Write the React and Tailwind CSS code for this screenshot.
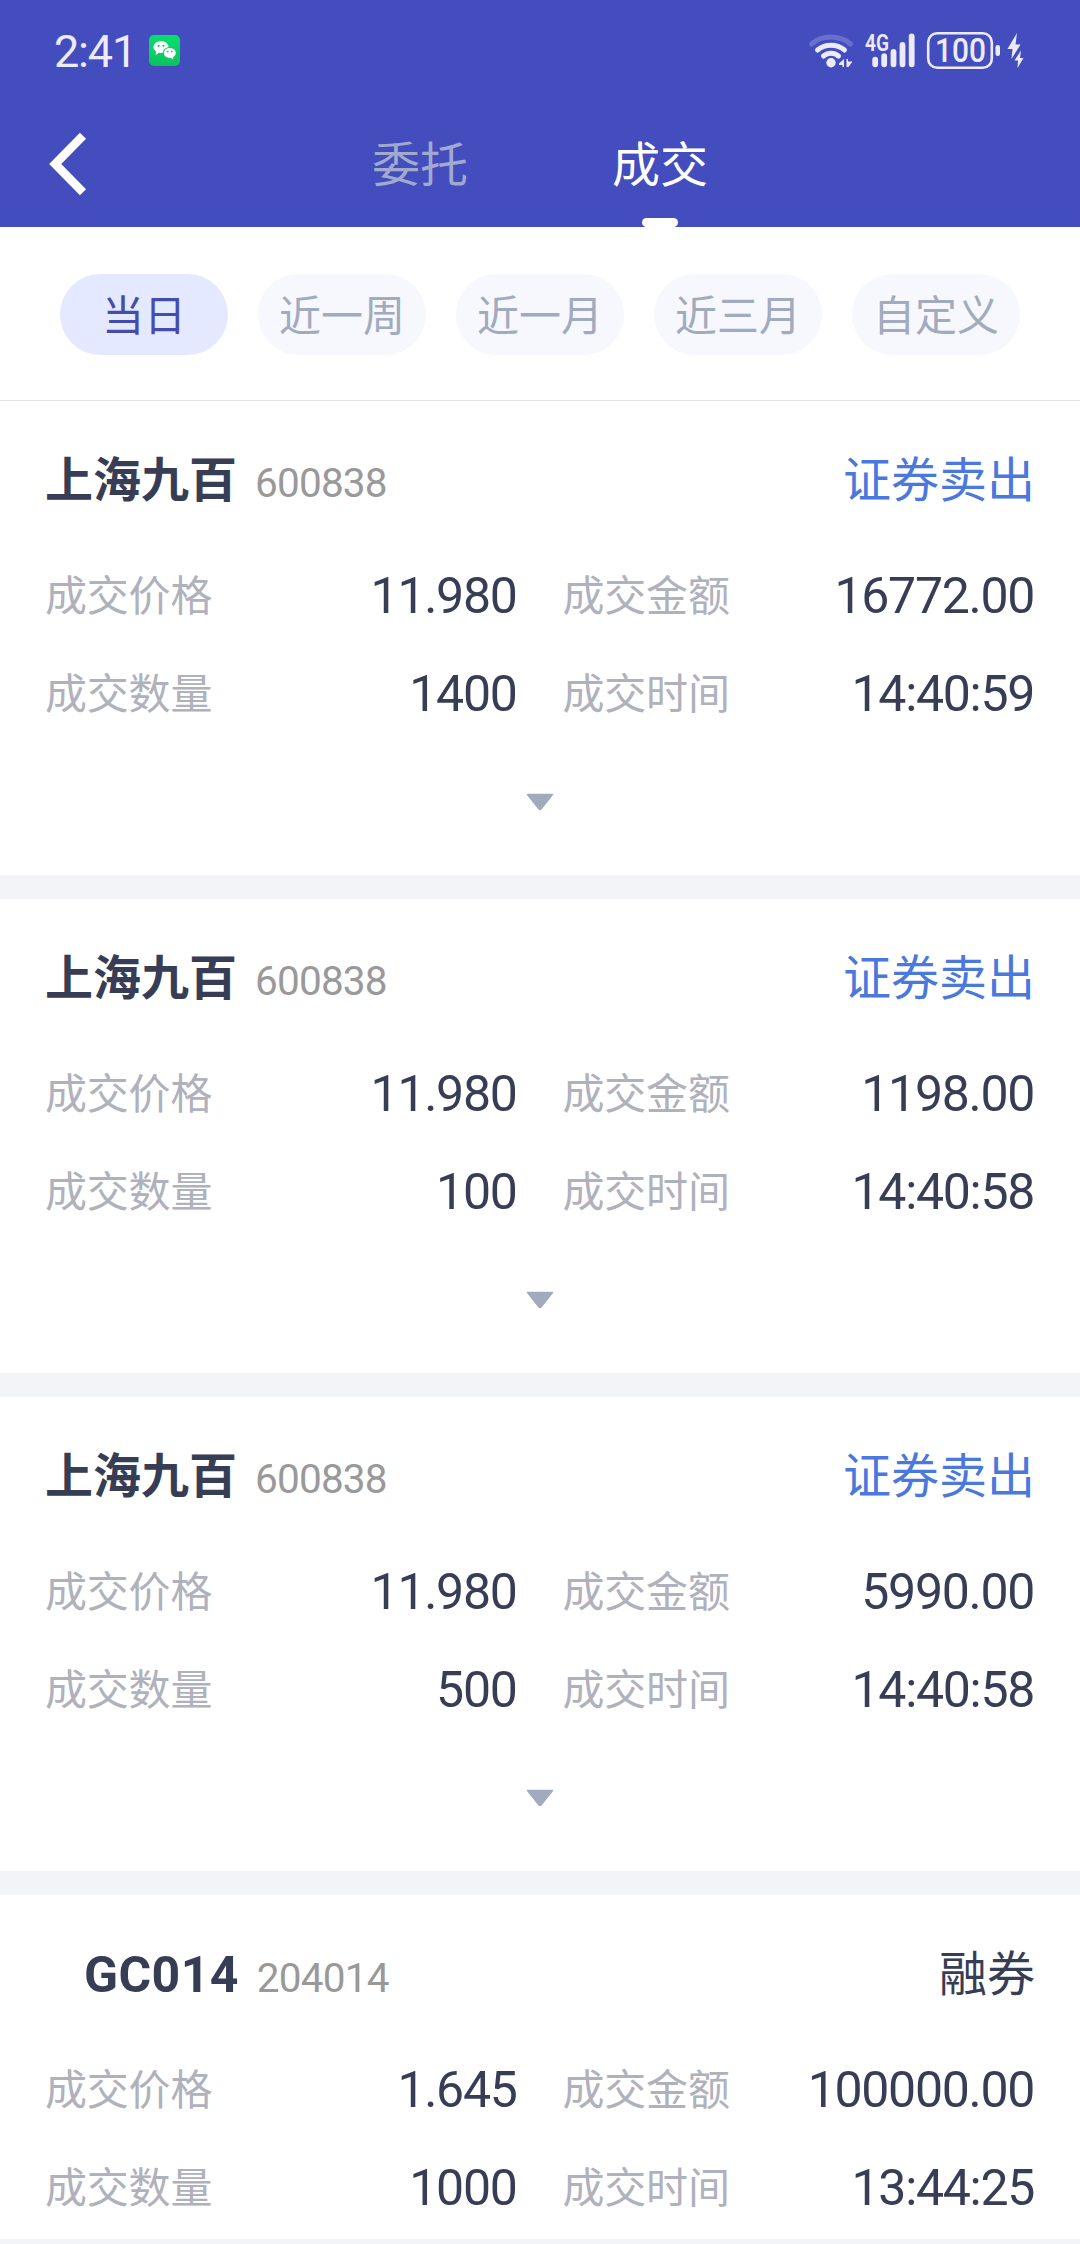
import React, { useState } from 'react';

const tabs = ['委托', '成交'];
const ranges = ['当日', '近一周', '近一月', '近三月', '自定义'];

const deals = [
  { name: '上海九百', code: '600838', side: '证券卖出', sell: true, price: '11.980', amount: '16772.00', qty: '1400', time: '14:40:59' },
  { name: '上海九百', code: '600838', side: '证券卖出', sell: true, price: '11.980', amount: '1198.00', qty: '100', time: '14:40:58' },
  { name: '上海九百', code: '600838', side: '证券卖出', sell: true, price: '11.980', amount: '5990.00', qty: '500', time: '14:40:58' },
  { name: 'GC014', code: '204014', side: '融券', sell: false, price: '1.645', amount: '100000.00', qty: '1000', time: '13:44:25' },
];

const WechatIcon = () => (
  <div className="h-[31px] w-[31px] rounded-[5px] bg-linear-to-b from-[#05df6d] to-[#0cc160]">
    <svg width="31" height="31" viewBox="0 0 31 31" className="block">
      <path d="M7 15.5 L6.8 20 L11 17 Z" fill="#fff" />
      <ellipse cx="12" cy="12" rx="7.6" ry="6.1" fill="#fff" />
      <ellipse cx="20.6" cy="17.8" rx="6.8" ry="5.8" fill="#08d067" />
      <ellipse cx="20.8" cy="18" rx="6" ry="5" fill="#fff" />
      <path d="M20.5 22 L24.2 24.4 L24.2 20.5 Z" fill="#fff" />
      <g fill="#08d067">
        <circle cx="9.6" cy="10.8" r="1.1" />
        <circle cx="14.6" cy="10.8" r="1.1" />
        <circle cx="18.8" cy="16.6" r="0.9" />
        <circle cx="22.8" cy="16.6" r="0.9" />
      </g>
    </svg>
  </div>
);

const StatusIcons = () => (
  <svg width="222" height="42" viewBox="806 30 222 42" fill="none" className="relative top-[1px] block">
    {/* Wifi */}
    <g stroke="#ebebfd" strokeWidth="5" strokeLinecap="round">
      <path d="M811.5 44 A 31 31 0 0 1 850.5 44" opacity="0.22" />
      <path d="M817.5 50 A 22 22 0 0 1 844.5 50" />
      <path d="M823.5 56 A 11.5 11.5 0 0 1 838.5 56" />
    </g>
    <circle cx="831" cy="62.7" r="4.7" fill="#ebebfd" />
    <path d="M839 63.5 L844 59 V67 H842.5 V65 H839 Z M846.5 59 L848 59 V61.5 H852.5 L848.5 67 H846.5 Z" fill="#ebebfd" />
    {/* Signal */}
    <text x="865" y="50.5" fontSize="23" fontWeight="600" textLength="24" lengthAdjust="spacingAndGlyphs" fill="#ebebfd" fontFamily="Roboto, sans-serif">4G</text>
    <g stroke="#ebebfd" strokeWidth="5.8" strokeLinecap="round">
      <path d="M875.2 59.7V64.3M884.2 56.2V64.3M893.5 52V64.3M902.5 45V64.3M911.7 36.5V64.3" />
    </g>
    {/* Battery */}
    <rect x="928.2" y="33.2" width="63.6" height="34.6" rx="9" stroke="#ebebfd" strokeWidth="2.6" />
    <text x="935" y="62" fontSize="33" fontWeight="500" textLength="51" lengthAdjust="spacingAndGlyphs" fill="#ebebfd" fontFamily="Roboto, sans-serif">100</text>
    <rect x="995.5" y="45" width="4.5" height="11" rx="2.2" fill="#ebebfd" />
    <path d="M1017 33 L1007.5 49 H1012.5 L1011.5 59 L1020.5 44.5 H1015.5 Z" fill="#ebebfd" />
    <path d="M1021 50.5 L1014.5 60.5 H1018 L1017.5 68 L1023.5 58 H1020 Z" fill="#ebebfd" />
  </svg>
);

const StatusBar = () => (
  <div className="flex h-[100px] items-center justify-between pl-[54px] pr-[52px]">
    <div className="flex items-center gap-[16px]">
      <span className="w-[79px] pt-[2px] text-[45px] leading-none tracking-[-1.2px] text-[#ebebfd]">2:41</span>
      <WechatIcon />
    </div>
    <StatusIcons />
  </div>
);

const Field = ({ label, value }) => (
  <div className="flex h-[98px] items-center justify-between pt-[3px]">
    <span className="text-[42px] tracking-[-0.2px] text-[#afb1bc]">{label}</span>
    <span className="pr-[1px] pb-[2px] text-[50px] tracking-[-1.3px] text-[#383d56]">{value}</span>
  </div>
);

const DealCard = ({ deal, last }) => (
  <div className="bg-white px-[45px]">
    <div className="flex h-[145px] items-center justify-between pt-[14px]">
      <div className="flex items-baseline">
        <span className={`font-bold text-[#383d56] ${deal.sell ? 'text-[48px]' : 'pl-[39px] text-[50px] tracking-[0.4px]'}`}>{deal.name}</span>
        <span className="ml-[18px] text-[40.5px] tracking-[-0.8px] text-[#999999]">{deal.code}</span>
      </div>
      <span className={`text-[48px] ${deal.sell ? 'text-[#4a78dc]' : 'text-[#383d56]'}`}>{deal.side}</span>
    </div>
    <div className="grid grid-cols-2 gap-x-[45px]">
      <Field label="成交价格" value={deal.price} />
      <Field label="成交金额" value={deal.amount} />
      <Field label="成交数量" value={deal.qty} />
      <Field label="成交时间" value={deal.time} />
    </div>
    {last ? (
      <div className="h-[3px]"></div>
    ) : (
      <div className="flex h-[133px] justify-center pt-[51px]">
        <svg width="28" height="18" viewBox="0 0 28 18">
          <path d="M1.5 1.5 H26.5 L15 16 Q14 17 13 16 Z" fill="#a0abbe" stroke="#a0abbe" strokeWidth="1.5" strokeLinejoin="round" />
        </svg>
      </div>
    )}
  </div>
);

export default function App() {
  const [tab, setTab] = useState('成交');
  const [range, setRange] = useState('当日');

  return (
    <div className="h-[2244px] w-[1080px] overflow-hidden bg-[#f3f4f7] font-['Roboto','Noto_Sans_CJK_SC',sans-serif] leading-none">
      <header className="h-[227px] bg-[#444dbe]">
        <StatusBar />
        <div className="flex h-[127px]">
          <button className="flex w-[300px] pt-[30px] pl-[46px]">
            <svg width="44" height="68" viewBox="0 0 44 68" fill="none" stroke="#fff" strokeWidth="8.6">
              <path d="M37 5.8 L9.2 34 L37 62.2" />
            </svg>
          </button>
          {tabs.map((t) => (
            <button
              key={t}
              onClick={() => setTab(t)}
              className={`flex w-[240px] flex-col items-center justify-between pt-[42px] text-[48px] leading-none ${t === tab ? 'text-white' : 'text-[#a0aace]'}`}
            >
              {t}
              {t === tab && <span className="h-[9px] w-[36px] rounded-full bg-white"></span>}
            </button>
          ))}
        </div>
      </header>

      {/* Date range filter */}
      <div className="flex h-[174px] justify-between border-b border-[#e1e4e6] bg-white px-[60px] pt-[47px]">
        {ranges.map((r) => (
          <button
            key={r}
            onClick={() => setRange(r)}
            className={`h-[81px] w-[168px] rounded-full pt-[4px] text-[42px] leading-none ${r === range ? 'bg-[#e5e9ff] text-[#444dac]' : 'bg-[#f6f8fd] text-[#a2abbd]'}`}
          >
            {r}
          </button>
        ))}
      </div>

      <div className="flex flex-col gap-[24px]">
        {deals.map((deal, i) => (
          <DealCard key={i} deal={deal} last={i === deals.length - 1} />
        ))}
      </div>
    </div>
  );
}
